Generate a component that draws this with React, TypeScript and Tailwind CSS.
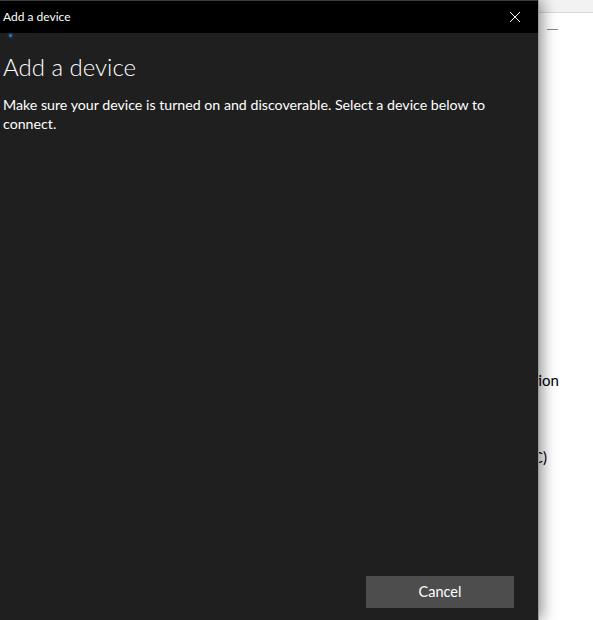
import React from "react";

function CloseIcon() {
  return (
    <svg width="12" height="12" viewBox="0 0 12 12" className="block">
      <path d="M1 1 L11 11 M11 1 L1 11" stroke="#ffffff" strokeWidth="1" fill="none" />
    </svg>
  );
}

export default function App() {
  return (
    <div className="relative h-[620px] w-[593px] overflow-hidden bg-white" style={{ fontFamily: 'Lato, "Noto Sans", sans-serif' }}>
      {/* settings page behind the dialog */}
      <div className="h-[13px] border-b border-[#d9d9d9] bg-[#f2f2f2]" />
      <div className="ml-[547px] mt-[16px] h-px w-[11px] bg-[#8a8a8a]" />
      <p className="absolute right-[34px] top-[369px] text-[15px] text-black">Notification</p>
      <p className="absolute right-[46px] top-[446px] text-[15px] text-black">(A2DP SRC)</p>

      {/* dialog */}
      <div className="absolute left-0 top-0 flex h-[620px] w-[539px] flex-col border-r border-[#9a9a9a] bg-[#1f1f1f] shadow-[3px_0_14px_rgba(0,0,0,0.45)]">
        <div className="flex h-[33px] shrink-0 items-center justify-between border-t border-[#3c3c3c] bg-black pl-[3px] pr-[17px]">
          <span className="text-[12px] leading-none text-white">Add a device</span>
          <CloseIcon />
        </div>
        <div className="relative flex flex-1 flex-col px-[3px]">
          <span className="absolute left-[9px] top-[1px] h-[3px] w-[3px] rounded-full bg-[#1a7fd6] shadow-[0_0_3px_#1a7fd6]" />
          <h1 className="mt-[18px] text-[24px] font-light leading-[32px] text-white">Add a device</h1>
          <p className="mt-[12px] w-[510px] text-[14.2px] leading-[19px] text-white">
            Make sure your device is turned on and discoverable. Select a device below to connect.
          </p>
          <div className="mt-auto mb-[12px] flex justify-end pr-[21px]">
            <button type="button" className="h-[32px] w-[148px] bg-[#4d4d4d] text-[14.5px] text-white">
              Cancel
            </button>
          </div>
        </div>
      </div>
    </div>
  );
}
